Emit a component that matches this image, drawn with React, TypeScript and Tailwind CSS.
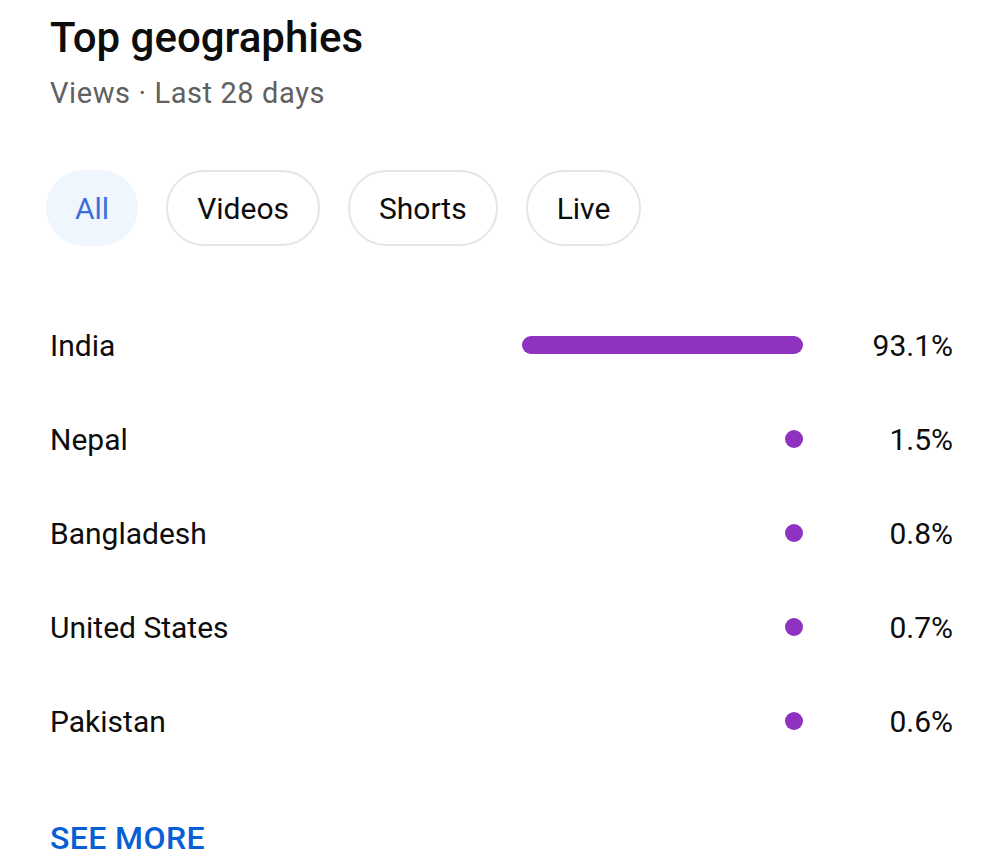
const rows = [
  { name: 'India', pct: 93.1 },
  { name: 'Nepal', pct: 1.5 },
  { name: 'Bangladesh', pct: 0.8 },
  { name: 'United States', pct: 0.7 },
  { name: 'Pakistan', pct: 0.6 },
];

const chips = ['All', 'Videos', 'Shorts', 'Live'];

export default function App() {
  return (
    <div
      className="w-[995px] h-[867px] bg-white overflow-hidden pl-[50px] pr-[42px] pt-[13px]"
      style={{ fontFamily: 'Roboto, "Noto Sans", sans-serif' }}
    >
      <h2 className="text-[42px] leading-[50px] font-medium text-[#0d0d0d]">Top geographies</h2>
      <p className="text-[29px] leading-[36px] text-[#606060] mt-[12px] tracking-[0.6px]">Views · Last 28 days</p>

      <div className="flex gap-[28px] mt-[59px] -ml-[4px]">
        {chips.map((c, i) => (
          <button
            key={c}
            className={
              i === 0
                ? 'h-[76px] px-[29px] rounded-full bg-[#f0f6fe] text-[#3e6fd8] text-[30px]'
                : 'h-[76px] px-[29px] rounded-full border-2 border-[#e5e5e5] text-[#0d0d0d] text-[30px]'
            }
          >
            {c}
          </button>
        ))}
      </div>

      <div className="mt-[52px]">
        {rows.map((r) => (
          <div key={r.name} className="flex items-center h-[94px]">
            <span className="flex-1 text-[30px] text-[#0d0d0d]">{r.name}</span>
            <div className="w-[303px] flex justify-end">
              <div
                className="h-[18px] min-w-[18px] rounded-full bg-[#8f31c1]"
                style={{ width: `${(r.pct / 100) * 302}px` }}
              />
            </div>
            <span className="w-[150px] text-right text-[30px] text-[#0d0d0d]">{r.pct}%</span>
          </div>
        ))}
      </div>

      <div className="mt-[50px] text-[32px] font-medium text-[#065fd4] leading-[40px] tracking-[0.4px]">SEE MORE</div>
    </div>
  );
}
